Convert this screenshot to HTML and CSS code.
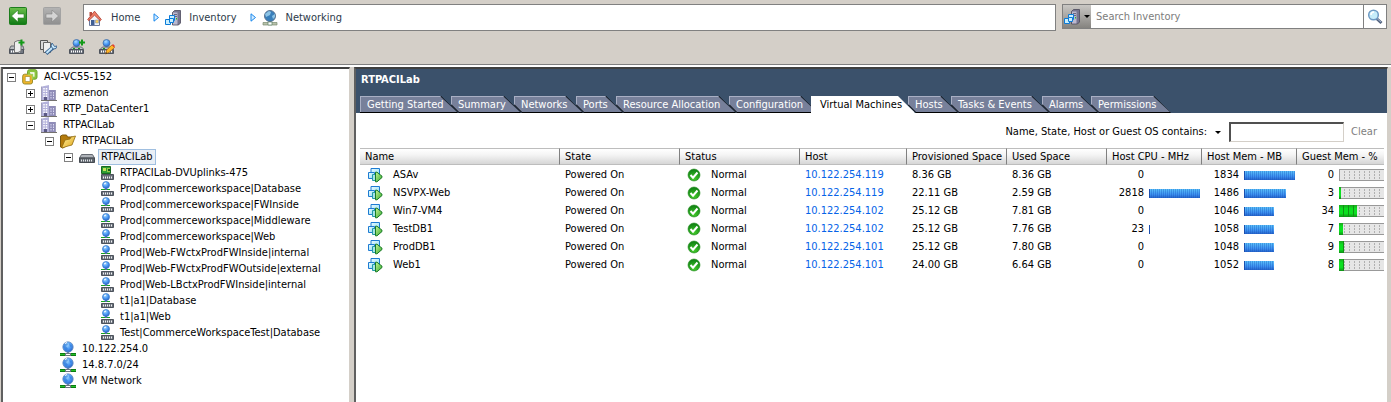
FILE: index.html
```html
<!DOCTYPE html>
<html lang="en">
<head>
<meta charset="utf-8">
<meta name="viewport" content="width=device-width, initial-scale=1">
<title>RTPACILab - Networking</title>
<link rel="stylesheet" href="styles.css">
</head>
<body>
<svg class="sprite" aria-hidden="true">
  <defs>
    <linearGradient id="g-green" x1="0" y1="0" x2="0" y2="1"><stop offset="0" stop-color="#6cc04c"/><stop offset="1" stop-color="#0e7a14"/></linearGradient>
    <linearGradient id="g-grey" x1="0" y1="0" x2="0" y2="1"><stop offset="0" stop-color="#b4b4b4"/><stop offset="1" stop-color="#8f8f8f"/></linearGradient>
    <radialGradient id="g-globe" cx=".4" cy=".3" r=".7"><stop offset="0" stop-color="#a9dcff"/><stop offset=".55" stop-color="#4d9bf5"/><stop offset="1" stop-color="#2b66c8"/></radialGradient>
    <radialGradient id="g-ok" cx=".5" cy=".8" r=".8"><stop offset="0" stop-color="#43c92b"/><stop offset="1" stop-color="#0c7d12"/></radialGradient>
    <linearGradient id="g-folder" x1="0" y1="0" x2="1" y2="1"><stop offset="0" stop-color="#fff0a0"/><stop offset="1" stop-color="#e0a414"/></linearGradient>
    <linearGradient id="g-play" x1="0" y1="0" x2="1" y2="1"><stop offset="0" stop-color="#c8f59a"/><stop offset="1" stop-color="#35a82a"/></linearGradient>
    <linearGradient id="g-vm" x1="0" y1="0" x2="1" y2="1"><stop offset="0" stop-color="#e9fbff"/><stop offset="1" stop-color="#8fdcf2"/></linearGradient>
  </defs>
  <symbol id="i-back" viewBox="0 0 18 18"><rect x=".5" y=".5" width="17" height="17" rx="1" fill="url(#g-green)" stroke="#1d7d1d"/><path d="M2.500 9l6.500-6v4h6v4H9v4z" fill="#fff" stroke="#2b7d24" stroke-width=".6"/></symbol>
  <symbol id="i-forward" viewBox="0 0 18 18"><rect x=".5" y=".5" width="17" height="17" rx="1" fill="url(#g-grey)" stroke="#a3a3a3"/><path d="M15.500 9L9 3v4H3v4h6v4z" fill="#d4d4d4" stroke="#858585" stroke-width=".6"/></symbol>
  <symbol id="i-home" viewBox="0 0 16 16"><path d="M2.500 8v7.500h10V8L7.500 3z" fill="#f1f3f8" stroke="#69779b"/><path d="M2.500 2h2.500v4H2.500z" fill="#b74b3d"/><path d="M.700 9.500L7.500 1.200l6.800 8.300-1 1.200-5.800-5.500-5.800 5.500z" fill="#ef7d66" stroke="#ac3a2e" stroke-width=".8"/><path d="M4 10h3.500v5H4z" fill="#405f94"/><path d="M8.500 10h3v3h-3z" fill="#ffd05a" stroke="#7484a8" stroke-width=".5"/></symbol>
  <symbol id="i-inventory" viewBox="0 0 16 16"><path d="M7.500 2.500l2-2h6V13l-2 2h-6z" fill="#77758f" stroke="#4b495c" stroke-width=".8"/><path d="M8 2.500h4.500v12H8z" fill="#bcb9ce"/><path d="M9 4.500h3M9 6.500h3" stroke="#69667e"/><path d="M11 8h1v1.500h-1z" fill="#28bd29"/><g stroke="#0c7bd8" fill="#c8efff"><path d="M4.500 5.500h5v5h-5z"/><path d="M.500 9.500h5v5h-5z"/><path d="M4.500 8.500h4v4h-4z"/></g></symbol>
  <symbol id="i-network" viewBox="0 0 16 16"><path d="M7 11h2v2H7z" fill="#6f7b8a"/><circle cx="8" cy="6" r="5.200" fill="url(#g-globe)" stroke="#6b91c1" stroke-width=".8"/><path d="M4 3l3-1 1 2-2 1 2 3-2 1-3-3zM9 2l3 3-2 1z" fill="#236ed0" opacity=".5"/><path d="M5 2.500l2-1" stroke="#fff"/><path d="M0 12h16v3H0z" fill="#0b7b13"/><path d="M0 13h16v1H0z" fill="#26bc28"/><path d="M5 12h6v3H5z" fill="#6b7480"/><path d="M6 13h4v1H6z" fill="#fff"/></symbol>
  <symbol id="i-network-grey" viewBox="0 0 16 16"><path d="M7 11h2v2H7z" fill="#6f7b8a"/><circle cx="8" cy="6" r="5.500" fill="#397fbb" stroke="#5e7591"/><path d="M3 4l4-3 2 1-1 3-4 2zM10 6l3-2v3l-2 2z" fill="#8dc4e6"/><path d="M1 12.500h14v2.500H1z" fill="#b7c1aa" stroke="#7b8c72" stroke-width=".7"/><path d="M6 12h4v3H6z" fill="#fff" stroke="#62876a" stroke-width=".7"/></symbol>
  <symbol id="i-crumb" viewBox="0 0 7 9"><path d="M1 .800L5.500 4.500 1 8.200z" fill="#d5ecff" stroke="#1787ed"/></symbol>
  <symbol id="i-search" viewBox="0 0 16 16"><path d="M9.500 9.500l5 4.500" stroke="#53627e" stroke-width="3"/><path d="M10 9.500l4 3.500" stroke="#9cb2d2"/><circle cx="6.500" cy="6" r="4.800" fill="#c6edfa" stroke="#6d9ac4" stroke-width="1.500"/><path d="M4 6a3 3 0 0 1 3-3" fill="none" stroke="#fff" stroke-width="1.500"/></symbol>
  <symbol id="i-vcenter" viewBox="0 0 16 16"><rect x="5.500" y=".700" width="9.500" height="9.500" rx="2" fill="#8bc53f" stroke="#6fa52e"/><rect x="8" y="3.200" width="4.500" height="4.500" fill="#fff"/><rect x=".700" y="5.200" width="9.800" height="9.800" rx="2" fill="#f0b428" stroke="#9b8d2c"/><rect x="3.200" y="7.700" width="4.800" height="4.800" fill="#fff" stroke="#9b8d2c" stroke-width=".6"/><path d="M5.500 5.500h5v5" fill="none" stroke="#9fd055" stroke-width="1.500"/></symbol>
  <symbol id="i-datacenter" viewBox="0 0 16 16"><path d="M1 1.500L8 0v15H1z" fill="#b3b1da"/><path d="M8 5h6v10H8z" fill="#8f8cb8"/><path d="M3 3v10M5.500 3v10" stroke="#fff" stroke-width="1.500" stroke-dasharray="1.500 1"/><path d="M10 7v7M12.500 7v7" stroke="#dddcf4" stroke-dasharray="1.500 1"/><path d="M.500 15V1.500M14.500 5v10" stroke="#77749d" stroke-width=".7"/><path d="M0 15h16v1H0z" fill="#74726f"/><path d="M3 12h3v3H3z" fill="#5c5985"/></symbol>
  <symbol id="i-folder" viewBox="0 0 16 16"><path d="M.500 14V3l2-1h4l1 2h5v4L3 15z" fill="#b47b0c" stroke="#7f5a0d"/><path d="M2 14L5 7l5-1 1-2 4.500-1L12 12l-4 1-6 2z" fill="url(#g-folder)" stroke="#926b0f" stroke-width=".8"/></symbol>
  <symbol id="i-switch" viewBox="0 0 16 16"><path d="M2.500 5.500h11l2 3.500H.500z" fill="#aeb2b8" stroke="#656a72"/><path d="M.500 9h15v4.500H.500z" fill="#5f656d" stroke="#454a51"/><path d="M2 11.500h12" stroke="#e4e7ea" stroke-width="2" stroke-dasharray="1 1"/></symbol>
  <symbol id="i-uplink" viewBox="0 0 16 16"><path d="M3.500 1.500h9v7h-9z" fill="#2d9e34" stroke="#18671f"/><path d="M5 3h3v3H5z" fill="#c4df5b"/><path d="M9 3h3v4H9z" fill="#95c846"/><path d="M10 4h2v2h-2z" fill="#0e5f17"/><path d="M3.500 9.500h12v5h-12z" fill="#686e78" stroke="#4d535c"/><path d="M5 12.500h10" stroke="#f0f2f4" stroke-width="2" stroke-dasharray="1 1"/></symbol>
  <symbol id="i-portgroup" viewBox="0 0 16 16"><path d="M7 7h2v2H7z" fill="#536b94"/><path d="M3 8.500h4M9 8.500h3" stroke="#17a420"/><circle cx="8" cy="4" r="3.500" fill="url(#g-globe)" stroke="#397bc8" stroke-width=".7"/><path d="M6 3l2-1" stroke="#fff"/><path d="M3.500 10.500h12v4h-12z" fill="#686e78" stroke="#4d535c"/><path d="M5 12.500h10" stroke="#f0f2f4" stroke-width="2" stroke-dasharray="1 1"/></symbol>
  <symbol id="i-vm" viewBox="0 0 16 16"><path d="M4 1.500h8.500v8H4z" fill="url(#g-vm)" stroke="#1d7bd2"/><path d="M1.500 5.500h6v6h-6z" fill="url(#g-vm)" stroke="#1d7bd2"/><path d="M5.500 7.500h5v6h-5z" fill="#a5e3ea" stroke="#249ba8"/><path d="M8.500 5.200h1.500l5 4v1.300l-5 4.300H8.500z" fill="url(#g-play)" stroke="#167a25"/></symbol>
  <symbol id="i-ok" viewBox="0 0 14 14"><circle cx="7" cy="7" r="6" fill="url(#g-ok)" stroke="#23891f" stroke-width=".6"/><path d="M3.500 7l2.500 2.700L10.500 4.500" fill="none" stroke="#fff" stroke-width="2"/></symbol>
  <symbol id="i-add-host" viewBox="0 0 16 16"><path d="M2 7h12l1 4H0z" fill="#b8bbc0" stroke="#666a70"/><path d="M.500 10.500h14v4H.500z" fill="#737982" stroke="#4e535b"/><path d="M2 12.500h9" stroke="#fff" stroke-width="2" stroke-dasharray="1 1"/><path d="M5.500 3L9 1.500h3V12L9 13.500H5.500z" fill="#eee" stroke="#777"/><path d="M9.500 3.500h6M12.500.500v6" stroke="#139a18" stroke-width="2"/></symbol>
  <symbol id="i-manage" viewBox="0 0 18 16"><path d="M1.500 1.500h7v9h-7z" fill="#d9d9d9" stroke="#555"/><path d="M4.500 3.500h7v10h-7z" fill="#eee" stroke="#666"/><path d="M7 14.500l7-6" stroke="#36618f" stroke-width="4"/><path d="M7.500 14l6.500-6" stroke="#c6e7fa" stroke-width="2"/><path d="M13 4l-1 3 2 3 3-.500 1-2.500-2.500.500-1-1.500z" fill="#c6e7fa" stroke="#36618f" stroke-width=".9"/></symbol>
  <symbol id="i-pg-base" viewBox="0 0 16 16"><path d="M6.500 7h2v4h-2z" fill="#41638f"/><path d="M1.500 10l2-2h9l2 2" fill="#bcc1c7" stroke="#646a72"/><circle cx="7.500" cy="4" r="3.500" fill="url(#g-globe)" stroke="#426fa5" stroke-width=".8"/><path d="M4 9.500h8" stroke="#139a18" stroke-dasharray="2 3"/><path d="M.500 10.500h14v4H.500z" fill="#686e78" stroke="#4d535c"/><path d="M2 12.500h12" stroke="#fff" stroke-width="2" stroke-dasharray="1 1"/></symbol>
  <symbol id="i-add-pg" viewBox="0 0 16 16"><use href="#i-pg-base"/><path d="M10 3.500h6M13 .500v6" stroke="#139a18" stroke-width="2"/></symbol>
  <symbol id="i-edit-pg" viewBox="0 0 16 16"><use href="#i-pg-base"/><path d="M6.500 15l1-4 5.500-5 2.500 2.500-5.500 5z" fill="#ffb727" stroke="#a45b10" stroke-width=".7"/><path d="M13 6l1-1 2 2-1 1.500z" fill="#e84030"/><path d="M6.500 15l.500-2 1.500 1.500z" fill="#333"/></symbol>
</svg>

<header class="topbar">
  <div class="nav-row">
    <div class="history">
      <button class="icon-button" type="button" aria-label="Back"><svg class="icon-18"><use href="#i-back"/></svg></button>
      <button class="icon-button" type="button" aria-label="Forward" disabled><svg class="icon-18"><use href="#i-forward"/></svg></button>
    </div>
    <nav class="breadcrumb" aria-label="Location">
      <a class="crumb" href="#"><svg class="icon"><use href="#i-home"/></svg>Home</a>
      <svg class="crumb-arrow"><use href="#i-crumb"/></svg>
      <a class="crumb" href="#"><svg class="icon"><use href="#i-inventory"/></svg>Inventory</a>
      <svg class="crumb-arrow"><use href="#i-crumb"/></svg>
      <a class="crumb" href="#"><svg class="icon"><use href="#i-network-grey"/></svg>Networking</a>
    </nav>
    <form class="search" role="search">
      <button class="search-scope" type="button" aria-label="Search scope"><svg class="icon"><use href="#i-inventory"/></svg><span class="caret"></span></button>
      <input class="search-input" type="text" placeholder="Search Inventory" aria-label="Search Inventory">
      <button class="search-go" type="button" aria-label="Search"><svg class="icon"><use href="#i-search"/></svg></button>
    </form>
  </div>
  <div class="tool-row">
    <button class="icon-button" type="button" aria-label="Add host"><svg class="icon"><use href="#i-add-host"/></svg></button>
    <button class="icon-button" type="button" aria-label="Manage hosts"><svg class="icon-wide"><use href="#i-manage"/></svg></button>
    <button class="icon-button" type="button" aria-label="New port group"><svg class="icon"><use href="#i-add-pg"/></svg></button>
    <button class="icon-button" type="button" aria-label="Edit settings"><svg class="icon"><use href="#i-edit-pg"/></svg></button>
  </div>
</header>

<main class="workspace">
  <aside class="tree-panel" aria-label="Inventory">
    <ul class="tree">
      <li><div class="node"><button class="toggle" type="button" aria-label="Collapse"></button><svg class="icon"><use href="#i-vcenter"/></svg><span class="label">ACI-VC55-152</span></div>
        <ul>
          <li><div class="node"><button class="toggle closed" type="button" aria-label="Expand"></button><svg class="icon"><use href="#i-datacenter"/></svg><span class="label">azmenon</span></div></li>
          <li><div class="node"><button class="toggle closed" type="button" aria-label="Expand"></button><svg class="icon"><use href="#i-datacenter"/></svg><span class="label">RTP_DataCenter1</span></div></li>
          <li><div class="node"><button class="toggle" type="button" aria-label="Collapse"></button><svg class="icon"><use href="#i-datacenter"/></svg><span class="label">RTPACILab</span></div>
            <ul>
              <li><div class="node"><button class="toggle" type="button" aria-label="Collapse"></button><svg class="icon"><use href="#i-folder"/></svg><span class="label">RTPACILab</span></div>
                <ul>
                  <li><div class="node"><button class="toggle" type="button" aria-label="Collapse"></button><svg class="icon"><use href="#i-switch"/></svg><span class="label selected">RTPACILab</span></div>
                    <ul>
                      <li><div class="node leaf"><svg class="icon"><use href="#i-uplink"/></svg><span class="label">RTPACILab-DVUplinks-475</span></div></li>
                      <li><div class="node leaf"><svg class="icon"><use href="#i-portgroup"/></svg><span class="label">Prod|commerceworkspace|Database</span></div></li>
                      <li><div class="node leaf"><svg class="icon"><use href="#i-portgroup"/></svg><span class="label">Prod|commerceworkspace|FWInside</span></div></li>
                      <li><div class="node leaf"><svg class="icon"><use href="#i-portgroup"/></svg><span class="label">Prod|commerceworkspace|Middleware</span></div></li>
                      <li><div class="node leaf"><svg class="icon"><use href="#i-portgroup"/></svg><span class="label">Prod|commerceworkspace|Web</span></div></li>
                      <li><div class="node leaf"><svg class="icon"><use href="#i-portgroup"/></svg><span class="label">Prod|Web-FWctxProdFWInside|internal</span></div></li>
                      <li><div class="node leaf"><svg class="icon"><use href="#i-portgroup"/></svg><span class="label">Prod|Web-FWctxProdFWOutside|external</span></div></li>
                      <li><div class="node leaf"><svg class="icon"><use href="#i-portgroup"/></svg><span class="label">Prod|Web-LBctxProdFWInside|internal</span></div></li>
                      <li><div class="node leaf"><svg class="icon"><use href="#i-portgroup"/></svg><span class="label">t1|a1|Database</span></div></li>
                      <li><div class="node leaf"><svg class="icon"><use href="#i-portgroup"/></svg><span class="label">t1|a1|Web</span></div></li>
                      <li><div class="node leaf"><svg class="icon"><use href="#i-portgroup"/></svg><span class="label">Test|CommerceWorkspaceTest|Database</span></div></li>
                    </ul>
                  </li>
                </ul>
              </li>
              <li><div class="node leaf"><svg class="icon"><use href="#i-network"/></svg><span class="label">10.122.254.0</span></div></li>
              <li><div class="node leaf"><svg class="icon"><use href="#i-network"/></svg><span class="label">14.8.7.0/24</span></div></li>
              <li><div class="node leaf"><svg class="icon"><use href="#i-network"/></svg><span class="label">VM Network</span></div></li>
            </ul>
          </li>
        </ul>
      </li>
    </ul>
  </aside>

  <section class="content">
    <div class="content-head">
      <h1 class="title">RTPACILab</h1>
      <div class="tabs" role="tablist">
        <button class="tab" type="button" role="tab"><span>Getting Started</span></button>
        <button class="tab" type="button" role="tab"><span>Summary</span></button>
        <button class="tab" type="button" role="tab"><span>Networks</span></button>
        <button class="tab" type="button" role="tab"><span>Ports</span></button>
        <button class="tab" type="button" role="tab"><span>Resource Allocation</span></button>
        <button class="tab" type="button" role="tab"><span>Configuration</span></button>
        <button class="tab active" type="button" role="tab" aria-selected="true"><span>Virtual Machines</span></button>
        <button class="tab" type="button" role="tab"><span>Hosts</span></button>
        <button class="tab" type="button" role="tab"><span>Tasks &amp; Events</span></button>
        <button class="tab" type="button" role="tab"><span>Alarms</span></button>
        <button class="tab" type="button" role="tab"><span>Permissions</span></button>
      </div>
    </div>
    <div class="filter">
      <label class="filter-label" for="filter">Name, State, Host or Guest OS contains:</label>
      <button class="filter-menu" type="button" aria-label="Choose filter columns"><span class="caret"></span></button>
      <input class="filter-input" id="filter" type="text">
      <button class="clear" type="button" disabled>Clear</button>
    </div>
    <div class="table-wrap">
      <table class="vms">
        <colgroup><col class="c-name"><col class="c-state"><col class="c-state"><col class="c-host"><col class="c-space"><col class="c-space"><col class="c-use"><col class="c-use"><col></colgroup>
        <thead><tr><th>Name</th><th>State</th><th>Status</th><th>Host</th><th>Provisioned Space</th><th>Used Space</th><th>Host CPU - MHz</th><th>Host Mem - MB</th><th>Guest Mem - %</th></tr></thead>
        <tbody>
          <tr><td><div class="cell vm"><svg class="icon"><use href="#i-vm"/></svg>ASAv</div></td><td>Powered On</td><td><div class="cell status"><svg class="icon-14"><use href="#i-ok"/></svg>Normal</div></td><td><a href="#">10.122.254.119</a></td><td>8.36 GB</td><td>8.36 GB</td><td><div class="usage"><span class="num">0</span></div></td><td><div class="usage"><span class="num">1834</span><span class="bar" style="width:51px"></span></div></td><td><div class="usage"><span class="num">0</span><span class="meter"></span></div></td></tr>
          <tr><td><div class="cell vm"><svg class="icon"><use href="#i-vm"/></svg>NSVPX-Web</div></td><td>Powered On</td><td><div class="cell status"><svg class="icon-14"><use href="#i-ok"/></svg>Normal</div></td><td><a href="#">10.122.254.119</a></td><td>22.11 GB</td><td>2.59 GB</td><td><div class="usage"><span class="num">2818</span><span class="bar" style="width:51px"></span></div></td><td><div class="usage"><span class="num">1486</span><span class="bar" style="width:42px"></span></div></td><td><div class="usage"><span class="num">3</span><span class="meter"><span class="fill" style="width:2px"></span></span></div></td></tr>
          <tr><td><div class="cell vm"><svg class="icon"><use href="#i-vm"/></svg>Win7-VM4</div></td><td>Powered On</td><td><div class="cell status"><svg class="icon-14"><use href="#i-ok"/></svg>Normal</div></td><td><a href="#">10.122.254.102</a></td><td>25.12 GB</td><td>7.81 GB</td><td><div class="usage"><span class="num">0</span></div></td><td><div class="usage"><span class="num">1046</span><span class="bar" style="width:30px"></span></div></td><td><div class="usage"><span class="num">34</span><span class="meter"><span class="fill" style="width:18px"></span></span></div></td></tr>
          <tr><td><div class="cell vm"><svg class="icon"><use href="#i-vm"/></svg>TestDB1</div></td><td>Powered On</td><td><div class="cell status"><svg class="icon-14"><use href="#i-ok"/></svg>Normal</div></td><td><a href="#">10.122.254.102</a></td><td>25.12 GB</td><td>7.76 GB</td><td><div class="usage"><span class="num">23</span><span class="bar" style="width:1px"></span></div></td><td><div class="usage"><span class="num">1058</span><span class="bar" style="width:30px"></span></div></td><td><div class="usage"><span class="num">7</span><span class="meter"><span class="fill" style="width:4px"></span></span></div></td></tr>
          <tr><td><div class="cell vm"><svg class="icon"><use href="#i-vm"/></svg>ProdDB1</div></td><td>Powered On</td><td><div class="cell status"><svg class="icon-14"><use href="#i-ok"/></svg>Normal</div></td><td><a href="#">10.122.254.101</a></td><td>25.12 GB</td><td>7.80 GB</td><td><div class="usage"><span class="num">0</span></div></td><td><div class="usage"><span class="num">1048</span><span class="bar" style="width:30px"></span></div></td><td><div class="usage"><span class="num">9</span><span class="meter"><span class="fill" style="width:5px"></span></span></div></td></tr>
          <tr><td><div class="cell vm"><svg class="icon"><use href="#i-vm"/></svg>Web1</div></td><td>Powered On</td><td><div class="cell status"><svg class="icon-14"><use href="#i-ok"/></svg>Normal</div></td><td><a href="#">10.122.254.101</a></td><td>24.00 GB</td><td>6.64 GB</td><td><div class="usage"><span class="num">0</span></div></td><td><div class="usage"><span class="num">1052</span><span class="bar" style="width:30px"></span></div></td><td><div class="usage"><span class="num">8</span><span class="meter"><span class="fill" style="width:5px"></span></span></div></td></tr>
        </tbody>
      </table>
    </div>
  </section>
</main>
</body>
</html>
```
FILE: styles.css
```css
* { box-sizing: border-box; }

body {
  margin: 0;
  min-height: 100vh;
  display: flex;
  flex-direction: column;
  background: #d4cfc8;
  color: #000;
  font: 11px/16px "DejaVu Sans Condensed", Tahoma, sans-serif;
}

button, input { font: inherit; color: inherit; border-radius: 0; }
button { margin: 0; padding: 0; border: 0; background: none; }
a { color: inherit; text-decoration: none; }
ul { list-style: none; margin: 0; padding: 0; }

.sprite { position: absolute; width: 0; height: 0; }
.icon { width: 16px; height: 16px; flex: none; display: block; }
.icon-wide { width: 18px; height: 16px; display: block; }
.icon-18 { width: 18px; height: 18px; display: block; }
.icon-14 { width: 14px; height: 14px; flex: none; display: block; }

.caret {
  border: 3px solid transparent;
  border-top-color: #000;
  border-bottom: 0;
}

/* Toolbars */
.topbar {
  padding: 4px 4px 9px;
  border-bottom: 1px solid #808080;
}
.nav-row { display: flex; align-items: flex-start; gap: 6px; color: #2d3a4a; }
.history { display: flex; gap: 16px; width: 73px; padding: 3px 0 0 5px; }
.breadcrumb {
  flex: 1;
  display: flex;
  align-items: center;
  height: 27px;
  padding: 0 3px;
  border: 1px solid #808080;
  background: #fff;
}
.crumb { display: flex; align-items: center; gap: 8px; }
.crumb-arrow { width: 7px; height: 9px; margin: 0 5px 0 13px; }

.search { display: flex; width: 325px; height: 25px; border: 1px solid #808080; background: #fff; }
.search-scope {
  display: flex;
  align-items: center;
  justify-content: center;
  gap: 4px;
  width: 28px;
  background: linear-gradient(#c9c7c4, #85837f);
}
.search-input { flex: 1; min-width: 0; border: 0; padding: 0 5px; outline: 0; background: #fff; }
.search-input::placeholder { color: #7c7c7c; opacity: 1; }
.search-go { display: flex; align-items: center; justify-content: center; width: 23px; border-left: 1px solid #808080; }

.tool-row { display: flex; gap: 14px; padding: 8px 5px 0; }
.tool-row .icon-wide { margin-right: -2px; }

/* Panels */
.workspace {
  flex: 1;
  display: flex;
  gap: 4px;
  padding: 0 3px 0 1px;
  border-top: 2px solid #fff;
}
.tree-panel {
  flex: none;
  width: 349px;
  padding: 0 4px;
  border: solid;
  border-width: 2px 1px 0 2px;
  border-color: #404040 #d4cfc8 #fff #606060;
  background: #fff;
}
.tree ul { padding-left: 19px; }
.node { display: flex; align-items: center; height: 16px; white-space: nowrap; }
.node .icon { margin-right: 3px; }
.leaf { padding-left: 15px; }
.toggle {
  width: 9px;
  height: 9px;
  margin-right: 6px;
  border: 1px solid #808080;
  background: linear-gradient(#000, #000) center / 5px 1px no-repeat #fff;
}
.toggle.closed {
  background:
    linear-gradient(#000, #000) center / 5px 1px no-repeat,
    linear-gradient(#000, #000) center / 1px 5px no-repeat #fff;
}
.label { padding: 0 3px; }
.selected { box-shadow: inset 0 0 0 1px #a0bfe0; background: #e9eff6; }

.content {
  flex: 1;
  min-width: 0;
  border: solid;
  border-width: 2px 1px 0 2px;
  border-color: #404040 #d4cfc8 #fff #606060;
  background: #fff;
}
.content-head { padding: 3px 4px 0; background: #3b516b; }
.title { margin: 0; padding-left: 1px; font-size: 11px; line-height: 16px; color: #fff; }

.tabs {
  display: grid;
  grid-template-columns: 91px 63px 62px 40px 113px 82px 97px 43px 91px 49px 73px;
  padding-top: 8px;
}
.tab {
  position: relative;
  height: 17px;
  margin-right: -7px;
  padding-left: 7px;
  text-align: left;
  color: #fff;
  white-space: nowrap;
}
/* The slanted end of each tab shows through the cut corner of the next one. */
.tab::before, .tab::after {
  content: "";
  position: absolute;
  inset: 0;
  clip-path: polygon(0 0, calc(100% - 17px) 0, 100% 100%, 8px 100%, 0 calc(100% - 8px));
  background: #000;
}
.tab::after {
  right: 1px;
  bottom: 1px;
  border: solid #a9afc4;
  border-width: 1px 0 0 1px;
  background: #77809a;
}
.tab:first-child::before, .tab:first-child::after,
.tab.active::before, .tab.active::after {
  clip-path: polygon(0 0, calc(100% - 17px) 0, 100% 100%, 0 100%);
}
.tab span { position: relative; z-index: 1; }
.tab.active { z-index: 1; padding-left: 9px; color: #000; }
.tab.active::before, .tab.active::after { background: #fff; border-color: #fff; }

.filter {
  display: flex;
  align-items: center;
  justify-content: flex-end;
  padding: 9px 10px 6px 4px;
}
.filter-menu { display: flex; padding: 4px 8px; }
.filter-input {
  width: 115px;
  height: 20px;
  border: solid;
  border-width: 2px 1px 1px 2px;
  border-color: #505050 #d4cfc8 #d4cfc8 #505050;
  background: #fff;
}
.clear { width: 33px; text-align: right; color: #808080; }

/* Virtual machine list */
.table-wrap { padding: 0 3px 0 4px; overflow: hidden; }
.vms { width: 100%; table-layout: fixed; border-collapse: separate; border-spacing: 0; }
.c-name { width: 200px; }
.c-state { width: 120px; }
.c-host { width: 107px; }
.c-space { width: 100px; }
.c-use { width: 95px; }
.vms th {
  height: 17px;
  padding: 0 0 0 5px;
  border: solid #bdbdbd;
  border-width: 1px 0;
  border-right: 1px solid #808080;
  background: linear-gradient(#fff, #f4f4f4 40%, #d6d6d6);
  font-weight: normal;
  line-height: 15px;
  text-align: left;
  white-space: nowrap;
}
.vms th:last-child { border-right: 0; }
.vms td { height: 18px; padding: 2px 0 0 5px; line-height: 16px; white-space: nowrap; overflow: hidden; }
.vms td a { color: #0563e8; }
.cell { display: flex; align-items: center; }
.vm { gap: 10px; padding-left: 2px; }
.status { gap: 10px; padding-left: 2px; }
.usage { display: flex; align-items: center; gap: 5px; }
.num { width: 32px; text-align: right; }
.bar {
  height: 9px;
  border-left: 1px solid #1c4fae;
  background:
    repeating-linear-gradient(90deg, transparent 0 1px, rgba(20, 80, 190, .35) 1px 2px),
    linear-gradient(#5cc3fa, #3d92f0 60%, #2563c8);
}
.meter {
  display: flex;
  flex: 1;
  height: 12px;
  border: solid #999;
  border-width: 1px 0 1px 1px;
  background:
    repeating-linear-gradient(#e6e6e6 0 1px, transparent 1px 3px),
    repeating-linear-gradient(90deg, #e6e6e6 0 4px, #b0b0b0 4px 5px);
}
.fill {
  margin: -1px 0 -1px -1px;
  background:
    repeating-linear-gradient(90deg, transparent 0 4px, #129015 4px 5px),
    linear-gradient(#1ba51e, #0be020 30%, #0be020 70%, #118d16);
}
```
